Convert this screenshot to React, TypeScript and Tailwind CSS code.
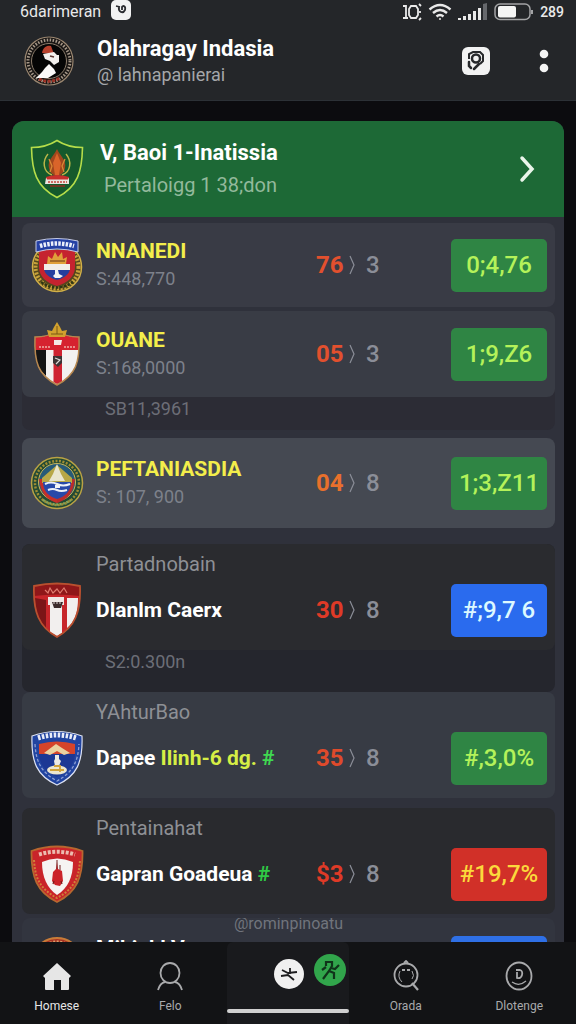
import type { ReactNode } from "react";
import { clsx } from "clsx";

const ShieldGreen = () => (
  <svg viewBox="0 0 54 60" className="h-[60px] w-[54px]" aria-hidden="true">
    <path
      d="M27 1.5C20 6 11 8.500 1.500 8.500C2 32 6 48 27 58.500C48 48 52 32 52.500 8.500C43 8.500 34 6 27 1.500Z"
      fill="#15592c"
      stroke="#b5dd4a"
      strokeWidth="1.600"
    />
    <path d="M18 15C12 22 13 33 22 36M36 15C42 22 41 33 32 36" fill="none" stroke="#b9b548" strokeWidth="1.500" />
    <path d="M27 10C24 17 17 21 19 29C20 35 25 37 27 37C29 37 34 35 35 29C37 21 30 17 27 10Z" fill="#a1471d" />
    <path d="M27 14L31 24L29 36H25L23 24Z" fill="#d9642a" />
    <path d="M19 20L22 27L20 33M35 20L32 27L34 33" fill="none" stroke="#d78a35" strokeWidth="1.300" />
    <path d="M16 39Q27 35 39 39V45H15Z" fill="#e9e5df" />
    <path d="M16 38Q27 34 39 38L38 40.500H17Z" fill="#c92f2c" />
    <path d="M18 43H37" stroke="#c6463f" strokeWidth="1.500" strokeDasharray="2 1" />
    <path d="M20 47H35" stroke="#8d2c20" strokeWidth="1.500" />
  </svg>
);

const CrestBlueBanner = () => (
  <svg viewBox="0 0 54 56" className="h-14 w-[54px]" aria-hidden="true">
    <circle cx="27" cy="30" r="24.500" fill="#54471d" stroke="#d2b048" strokeWidth="1.500" />
    <circle cx="27" cy="30" r="21.500" fill="none" stroke="#c8a23a" strokeWidth="4" strokeDasharray="2 1.500" />
    <path d="M9 13H45V30C45 40 37 46 27 49C17 46 9 40 9 30Z" fill="#c5232f" />
    <path d="M14 21H40V31C40 37 34 41 27 43C20 41 14 37 14 31Z" fill="#263e9e" />
    <path d="M14 21H40V28H14Z" fill="#c5232f" />
    <path d="M14 27H40V33H14Z" fill="#f1eee9" />
    <path d="M17 27L18 19L22 22L25 15L28 20L32 15L33 22L37 20L36 27Z" fill="#e0a03a" />
    <path d="M20 24H35" stroke="#8d5922" strokeWidth="1.500" />
    <path d="M25 33H28L29 37L33 39L30 41H25L23 39L25 37Z" fill="#f2f2f2" />
    <path d="M6 4Q27 -1 48 4V15Q27 9 6 15Z" fill="#2440a4" stroke="#c5cbe5" strokeWidth="1" />
    <path d="M10 9Q27 4 44 9" fill="none" stroke="#eceffa" strokeWidth="4.500" strokeDasharray="2.500 1.200" />
    <path d="M11 45Q27 56 43 45" fill="none" stroke="#2e3713" strokeWidth="2.500" strokeDasharray="2.500 1.500" />
  </svg>
);

const CrestStriped = () => (
  <svg viewBox="0 0 54 64" className="h-16 w-[54px]" aria-hidden="true">
    <path d="M5 15C14 15 21 13 27 9C33 13 40 15 49 15C50 40 46 53 27 63C8 53 4 40 5 15Z" fill="#f3f1f0" />
    <path d="M5 15C14 15 21 13 27 9C33 13 40 15 49 15L49 28H5Z" fill="#d6222f" />
    <path d="M5.500 28H16V54C8 47 5.500 40 5.500 28Z" fill="#141414" />
    <path d="M23.500 28H32V60L27 62L23.500 60Z" fill="#cf2231" />
    <path d="M9 25H20M34 25H45" stroke="#f0b0a8" strokeWidth="1.300" strokeDasharray="2 1" />
    <path d="M24 18H32L31 23H24Z" fill="#f3e9e4" />
    <path d="M23 34H32V41L28 45L23 41Z" fill="#3b3334" />
    <path d="M25 36L30 38L26 42" fill="none" stroke="#dedada" strokeWidth="1.200" />
    <path
      d="M5 15C14 15 21 13 27 9C33 13 40 15 49 15C50 40 46 53 27 63C8 53 4 40 5 15Z"
      fill="none"
      stroke="#b7874e"
      strokeWidth="1.500"
    />
    <path d="M19 15L17 8L22 9L24 5L27 0L30 5L32 9L37 8L35 15Z" fill="#d1a12e" />
    <path d="M21 12H33M27 4V12" stroke="#7a5713" strokeWidth="1" />
  </svg>
);

const CrestRound = () => (
  <svg viewBox="0 0 54 56" className="h-14 w-[54px]" aria-hidden="true">
    <circle cx="27" cy="28" r="25.500" fill="#234a34" stroke="#b9a244" strokeWidth="1.500" />
    <circle cx="27" cy="28" r="22" fill="none" stroke="#a08d34" strokeWidth="2.500" strokeDasharray="2 1.500" />
    <circle cx="27" cy="27" r="18.500" fill="#275a78" stroke="#c9b65a" strokeWidth="1" />
    <path d="M9 24C11 40 18 45 27 48V24Z" fill="#c63029" />
    <path d="M45 24C43 40 36 45 27 48V24Z" fill="#b92c2c" />
    <path d="M12 23L20 16L27 10L34 16L42 23V28H12Z" fill="#b7a746" />
    <path d="M27 9L31 19L35 26H19L23 19Z" fill="#e9e5cd" />
    <path d="M13 27H41C41 36 35 42 27 44C19 42 13 36 13 27Z" fill="#2849a9" />
    <path d="M15 29Q21 26 27 29T40 29M18 35Q23 33 27 35T37 35" fill="none" stroke="#eef1f8" strokeWidth="2" />
    <path d="M25 30H30V33H25Z" fill="#f5f5f5" />
    <path d="M13 45Q27 54 41 45" fill="none" stroke="#87a65c" strokeWidth="2.500" strokeDasharray="2 1.500" />
  </svg>
);

const CrestRedWhite = () => (
  <svg viewBox="0 0 54 56" className="h-14 w-[54px]" aria-hidden="true">
    <path d="M4 4Q27 -1 50 4C51 30 45 45 27 55C9 45 3 30 4 4Z" fill="#c7252a" />
    <path d="M4 4Q27 -1 50 4V14Q27 11 4 14Z" fill="#8f1719" />
    <path d="M15 8L18 11L20 6L23 11L27 7L30 11L34 6L37 11" fill="none" stroke="#e07a6e" strokeWidth="1.200" />
    <path d="M5 16L16 18V46C9 39 5 30 5 16Z" fill="#7c1517" />
    <path d="M20 22H32V51L27 54L20 50Z" fill="#f2efee" />
    <path d="M37 16H48C48 30 45 40 37 46Z" fill="#f2efee" />
    <path d="M18 15H34V23H18Z" fill="#efe8e6" />
    <path d="M22 20H33L31 26H24Z" fill="#3c2b2b" />
    <path d="M23 21H32" stroke="#d8d0d0" strokeWidth="1" strokeDasharray="2 1" />
    <path
      d="M4 4Q27 -1 50 4C51 30 45 45 27 55C9 45 3 30 4 4Z"
      fill="none"
      stroke="#b9502f"
      strokeWidth="1.800"
    />
  </svg>
);

const CrestBlueShield = () => (
  <svg viewBox="0 0 54 56" className="h-14 w-[54px]" aria-hidden="true">
    <path d="M2 6Q27 -3 52 6C53 32 47 46 27 55C7 46 1 32 2 6Z" fill="#2144a0" stroke="#dde2f2" strokeWidth="1.200" />
    <path d="M8 8Q27 2 46 8" fill="none" stroke="#e9ecf7" strokeWidth="5" strokeDasharray="2.500 1.500" />
    <path d="M5 14C6 32 11 42 27 51C43 42 48 32 49 14" fill="none" stroke="#8e9fd4" strokeWidth="1.300" strokeDasharray="3 2" />
    <path d="M9 14Q27 9 45 14V24H9Z" fill="#d5442b" />
    <path d="M9 24H45C44 36 38 42 27 47C16 42 10 36 9 24Z" fill="#1c3894" />
    <path d="M14 23L22 17L26 14L32 18L40 23L34 25L27 21L20 25Z" fill="#ebd2a0" />
    <path d="M25 25H29V29L31 31L29 36H25L24 31L25 29Z" fill="#eceae3" />
    <ellipse cx="27" cy="40" rx="10" ry="4.500" fill="#ece7cf" />
    <path d="M20 40H34M24 36H30V42" stroke="#d1a33a" strokeWidth="1.800" fill="none" />
  </svg>
);

const CrestRedShield = () => (
  <svg viewBox="0 0 54 58" className="h-[58px] w-[54px]" aria-hidden="true">
    <path d="M1.500 6Q27 -3 52.500 6C53 32 47 47 27 57C7 47 1 32 1.500 6Z" fill="#c9242a" stroke="#b7672f" strokeWidth="1.800" />
    <path d="M4 15C5 33 10 44 27 53C44 44 49 33 50 15" fill="none" stroke="#d0803a" strokeWidth="2" strokeDasharray="2 1.500" />
    <path d="M9 9.500Q27 4 45 9.500" fill="none" stroke="#ecbcb0" strokeWidth="4" strokeDasharray="3 1.500" />
    <path d="M12 17Q27 10 43 17C43 32 38 43 27 50C17 43 12 32 12 17Z" fill="#f6f3f2" />
    <path d="M27 17L28 24L32 26L33 36L30 41L25 40L22 36L23 27L26 24Z" fill="#cb2229" />
    <path d="M27 15V24M30 20V25" stroke="#712021" strokeWidth="1" />
    <path d="M24 36L23 39M31 36L32 39" stroke="#7b1719" strokeWidth="1.200" />
  </svg>
);

const Avatar = () => (
  <svg viewBox="0 0 52 52" className="size-[52px] shrink-0" aria-hidden="true">
    <circle cx="26" cy="26" r="24" fill="#191614" stroke="#9a8670" strokeWidth="1.200" />
    <circle cx="26" cy="26" r="21" fill="none" stroke="#a59788" strokeWidth="3" strokeDasharray="1.500 1.500" />
    <circle cx="26" cy="26" r="17.500" fill="#050505" stroke="#8b7c6b" strokeWidth="1" />
    <path d="M19 18C20 12 24 10 28 11L31 19Z" fill="#b6402c" />
    <path d="M20 19L31 17L34 20H36V27L31 30L27 26L22 24Z" fill="#f1eeec" />
    <path d="M26 29L31 34L33 38L25 43H13L19 37L22 33Z" fill="#faf9f8" />
    <path d="M27 21L31 22" stroke="#593530" strokeWidth="1.500" />
    <path d="M16 44Q26 49 37 43" fill="none" stroke="#9d3327" strokeWidth="3" strokeDasharray="3 1.500" />
  </svg>
);

type Tone = "green" | "blue" | "red";

const tones: Record<Tone, string> = {
  green: "bg-[#2f8544] text-[#b4f25a]",
  blue: "bg-[#2a6bee] text-[#dcf8ff]",
  red: "bg-[#d13028] text-[#fbd93c]",
};

interface Entry {
  crest: ReactNode;
  label?: string;
  name: ReactNode;
  amount?: string;
  score: string;
  scoreColor: string;
  rest: string;
  value: string;
  tone: Tone;
  row: string;
  note?: string;
  group: string;
}

const entries: Entry[] = [
  {
    crest: <CrestBlueBanner />,
    name: <span className="text-[#f3ee4b]">NNANEDI</span>,
    amount: "S:448,770",
    score: "76",
    scoreColor: "text-[#e2502e]",
    rest: "3",
    value: "0;4,76",
    tone: "green",
    row: "min-h-[84px] bg-[#393b45]",
    group: "mb-1",
  },
  {
    crest: <CrestStriped />,
    name: <span className="text-[#f3ee4b]">OUANE</span>,
    amount: "S:168,0000",
    score: "05",
    scoreColor: "text-[#e2502e]",
    rest: "3",
    value: "1;9,Z6",
    tone: "green",
    row: "min-h-[86px] bg-[#393c45]",
    note: "SB11,3961",
    group: "mb-2 bg-[#2c2c35]",
  },
  {
    crest: <CrestRound />,
    name: <span className="text-[#f3ee4b]">PEFTANIASDIA</span>,
    amount: "S: 107, 900",
    score: "04",
    scoreColor: "text-[#e8702c]",
    rest: "8",
    value: "1;3,Z11",
    tone: "green",
    row: "min-h-[90px] bg-[#454952]",
    group: "mb-4",
  },
  {
    crest: <CrestRedWhite />,
    label: "Partadnobain",
    name: "Dlanlm Caerx",
    score: "30",
    scoreColor: "text-[#df3a27]",
    rest: "8",
    value: "#;9,7 6",
    tone: "blue",
    row: "bg-[#2a2b2f]",
    note: "S2:0.300n",
    group: "bg-[#25262d]",
  },
  {
    crest: <CrestBlueShield />,
    label: "YAhturBao",
    name: (
      <>
        Dapee <span className="text-[#d6ee45]">Ilinh-6 dg.</span> <span className="text-[#3fd850]">#</span>
      </>
    ),
    score: "35",
    scoreColor: "text-[#df4a2b]",
    rest: "8",
    value: "#,3,0%",
    tone: "green",
    row: "bg-[#373b44]",
    group: "mb-2.5",
  },
  {
    crest: <CrestRedShield />,
    label: "Pentainahat",
    name: (
      <>
        Gapran Goadeua <span className="text-[#2fc845]">#</span>
      </>
    ),
    score: "$3",
    scoreColor: "text-[#df3a27]",
    rest: "8",
    value: "#19,7%",
    tone: "red",
    row: "bg-[#292a2e]",
    group: "mb-1",
  },
];

const EntryRow = ({ entry }: { entry: Entry }) => (
  <li className={clsx("rounded-lg", entry.group)}>
    <div
      className={clsx(
        "grid grid-cols-[54px_1fr_123px_96px] content-center items-center gap-x-3 rounded-lg px-2",
        entry.label && "pt-2 pb-3",
        entry.row,
      )}
    >
      {entry.label && (
        <p className="col-span-3 col-start-2 mb-1.5 text-xl leading-6 text-[#8e9095]">{entry.label}</p>
      )}
      <div className="flex h-14 items-center justify-center">{entry.crest}</div>
      <div className="min-w-0 whitespace-nowrap">
        <h2 className="text-[21px] leading-7 font-bold text-white">{entry.name}</h2>
        {entry.amount && <p className="text-lg leading-7 text-[#7d818b]">{entry.amount}</p>}
      </div>
      <p className="flex items-center text-2xl text-[#8b8e98]">
        <span className={clsx("w-7 font-bold", entry.scoreColor)}>{entry.score}</span>
        <svg viewBox="0 0 8 22" className="mx-1 h-[22px] w-2" fill="none" stroke="currentColor" aria-hidden="true">
          <path d="M2 2L6 11L2 20" strokeWidth="1.200" />
        </svg>
        <span className="ml-1.5 font-medium">{entry.rest}</span>
      </p>
      <span
        className={clsx(
          "flex h-[53px] items-center justify-center rounded-[5px] text-2xl font-medium whitespace-nowrap",
          tones[entry.tone],
        )}
      >
        {entry.value}
      </span>
    </div>
    {entry.note && (
      <p className={clsx("pl-[83px] text-lg leading-6 text-[#6c6e77]", entry.label ? "pb-[18px]" : "pb-[9px]")}>
        {entry.note}
      </p>
    )}
  </li>
);

const StatusBar = () => (
  <div className="flex h-6 items-center pr-3 pl-5 text-[#e9e9e9]">
    <span className="text-base leading-6">6darimeran</span>
    <svg viewBox="0 0 20 20" className="mb-1 ml-2.5 size-5" aria-hidden="true">
      <rect width="20" height="20" rx="5" fill="#f2f2f2" />
      <path d="M5 6L9 7M8 7C7 12 12 14 14 10C15 6 12 5 11 7V10" fill="none" stroke="#2b2c30" strokeWidth="1.800" />
    </svg>
    <div className="ml-auto flex items-center gap-1.5">
      <svg viewBox="0 0 20 20" className="size-5" fill="none" stroke="currentColor" strokeWidth="1.800" aria-hidden="true">
        <path d="M1 4H4V16M1 16H6" />
        <path d="M9 4H14L16 7V13L14 16H9L7 13V7Z" />
        <path d="M17 2L19 4M18 9V11M17 18L19 16" />
      </svg>
      <svg viewBox="0 0 24 18" className="h-[18px] w-6" fill="none" stroke="currentColor" strokeWidth="2.400" aria-hidden="true">
        <path d="M1.500 6.500Q12 -2.500 22.500 6.500M5 10Q12 4 19 10M8.500 13.500Q12 10.500 15.500 13.500" />
        <circle cx="12" cy="16" r="1" fill="currentColor" stroke="none" />
      </svg>
      <svg viewBox="0 0 30 18" className="h-[18px] w-[30px]" fill="currentColor" aria-hidden="true">
        <path d="M0 15H3V17H0ZM5 13H8V17H5ZM10 11H13V17H10ZM15 8H18V17H15ZM20 5H23V17H20Z" />
        <path d="M25 1L29 0V17H25Z" fill="#66686c" />
      </svg>
      <svg viewBox="0 0 40 18" className="h-[18px] w-10" aria-hidden="true">
        <rect x="1" y="1" width="35" height="15.500" rx="5" fill="none" stroke="#a2a3a5" strokeWidth="1.500" />
        <rect x="4" y="3" width="18" height="11.500" rx="2" fill="#f5f5f5" />
        <path d="M38 7V11" stroke="#a2a3a5" strokeWidth="2" />
      </svg>
      <span className="text-sm font-medium">289</span>
    </div>
  </div>
);

const Header = () => (
  <header className="shrink-0 border-b border-[#2c3136] bg-[#242629]">
    <StatusBar />
    <div className="flex h-[76px] items-center pr-6 pb-0.5 pl-[23px]">
      <Avatar />
      <div className="ml-[22px] whitespace-nowrap">
        <h1 className="text-[22px] leading-7 font-bold text-white">Olahragay Indasia</h1>
        <p className="text-lg leading-6 text-[#a5a7aa]">@ lahnapanierai</p>
      </div>
      <button type="button" aria-label="Find" className="ml-auto">
        <svg viewBox="0 0 28 28" className="size-7">
          <rect width="28" height="28" rx="6" fill="#f2f2f2" />
          <path d="M7 12V7L11 5H18L21 8V14L18 17" fill="none" stroke="#26282b" strokeWidth="2" />
          <circle cx="14" cy="11.500" r="4" fill="none" stroke="#26282b" strokeWidth="2.500" />
          <path d="M7 15V19L9 21M12 22L17 17" fill="none" stroke="#26282b" strokeWidth="2.500" strokeLinecap="round" />
        </svg>
      </button>
      <button type="button" aria-label="More" className="ml-[46px]">
        <svg viewBox="0 0 16 28" className="h-7 w-4" fill="#f4f4f4">
          <circle cx="8" cy="7" r="4.300" />
          <circle cx="8" cy="21" r="4.300" />
        </svg>
      </button>
    </div>
  </header>
);

const NavItem = ({ label, active, children }: { label: string; active?: boolean; children: ReactNode }) => (
  <a
    href="#"
    className={clsx(
      "flex flex-1 flex-col items-center gap-1 pt-[18px] text-xs leading-5",
      active ? "text-[#e6e6e6]" : "text-[#a9aaac]",
    )}
  >
    {children}
    {label}
  </a>
);

const BottomNav = () => (
  <nav className="flex h-[82px] shrink-0 bg-[#121315]">
    <NavItem label="Homese" active>
      <svg viewBox="0 0 30 32" className="h-8 w-[30px]" fill="currentColor" aria-hidden="true">
        <path d="M15 3L29 16L27 18V29Q27 30 26 30H19V20H12V30H4Q3 30 3 29V18L1 16Z" />
      </svg>
    </NavItem>
    <NavItem label="Felo">
      <svg viewBox="0 0 30 32" className="h-8 w-[30px]" fill="none" stroke="currentColor" strokeWidth="1.800" aria-hidden="true">
        <ellipse cx="15" cy="13" rx="9.500" ry="10" />
        <path d="M3 30Q5 23 10 22M27 30Q25 23 20 22" />
      </svg>
    </NavItem>
    <div className="flex w-[122px] flex-col items-end justify-between rounded-t-md bg-[#191a1d] pt-2 pb-[11px]">
      <div className="flex items-center gap-2 pr-0.5">
        <button type="button" aria-label="Matches" className="mt-2">
          <svg viewBox="0 0 32 32" className="size-8">
            <circle cx="16" cy="16" r="15" fill="#f0f0f0" />
            <path d="M9 12L15 15L24 14M8 18L15 17L21 22M17 10V16" fill="none" stroke="#1c1c1e" strokeWidth="1.800" />
          </svg>
        </button>
        <button type="button" aria-label="Play">
          <svg viewBox="0 0 34 34" className="size-[34px]">
            <circle cx="17" cy="17" r="16" fill="#31a54b" />
            <path d="M13 13V9H19V13L16 18L10 26M16 18L21 20V26M9 17L13 14M18 15L22 16L26 12" fill="none" stroke="#10331a" strokeWidth="2.200" />
          </svg>
        </button>
      </div>
      <span className="h-1 w-full rounded-full bg-[#d0d0d0]" />
    </div>
    <NavItem label="Orada">
      <svg viewBox="0 0 30 32" className="h-8 w-[30px]" fill="none" stroke="currentColor" strokeWidth="1.800" aria-hidden="true">
        <circle cx="15" cy="15" r="11.500" />
        <path d="M21 23L27 30" strokeWidth="2.200" />
        <path d="M9 11Q6 17 11 22M21 11Q24 16 21 19" strokeWidth="1" />
        <path d="M11 10H14M16 10H19M13 3L15 1L17 3" />
      </svg>
    </NavItem>
    <NavItem label="Dlotenge">
      <svg viewBox="0 0 30 32" className="h-8 w-[30px]" fill="none" stroke="currentColor" strokeWidth="1.800" aria-hidden="true">
        <ellipse cx="15" cy="16" rx="12.500" ry="13.500" />
        <path d="M12 10H16Q19 11 18 15Q17 19 13 18V12" />
        <path d="M8 22Q15 27 22 21" strokeWidth="1.200" />
      </svg>
    </NavItem>
  </nav>
);

const App = () => {
  return (
    <div className="flex h-screen flex-col bg-[#0c0c0f] font-['Roboto',sans-serif]">
      <Header />
      <main className="min-h-0 flex-1 overflow-hidden px-3 pt-5">
        <section className="min-h-full overflow-hidden rounded-t-xl bg-[#2f313b]">
          <div className="flex h-24 items-center bg-[#1d6936] pr-7 pl-[18px]">
            <ShieldGreen />
            <div className="ml-4 whitespace-nowrap">
              <h2 className="text-[22px] leading-8 font-bold text-white">V, Baoi 1-Inatissia</h2>
              <p className="pl-1 text-xl leading-8 text-[#93b99c]">Pertaloigg 1 38;don</p>
            </div>
            <button type="button" aria-label="Open" className="ml-auto">
              <svg viewBox="0 0 18 28" className="h-7 w-[18px]" fill="none" stroke="#e9f5ea" strokeWidth="3.500" strokeLinecap="round">
                <path d="M4 3L14 14L4 25" />
              </svg>
            </button>
          </div>
          <ul className="pt-1.5 pr-[9px] pl-2.5">
            {entries.map((entry) => (
              <EntryRow key={entry.value} entry={entry} />
            ))}
            <li className="rounded-lg bg-[#32353f]">
              <div className="flex h-4 items-end justify-center overflow-hidden">
                <p className="text-base leading-5 text-[#70747c]">@rominpinoatu</p>
              </div>
              <div className="grid grid-cols-[54px_1fr_123px_96px] gap-x-3 px-2 pt-0.5">
                <svg viewBox="0 0 54 54" className="size-[54px]" aria-hidden="true">
                  <circle cx="27" cy="27" r="25" fill="#a83222" stroke="#c77b38" strokeWidth="2" />
                  <circle cx="27" cy="27" r="21" fill="none" stroke="#d9a06a" strokeWidth="3" strokeDasharray="2 1.500" />
                </svg>
                <h2 className="text-[21px] leading-6 font-bold text-white">Mibinkl Vn</h2>
                <span className="col-start-4 h-[53px] rounded-[5px] bg-[#2f70e6]" />
              </div>
            </li>
          </ul>
        </section>
      </main>
      <BottomNav />
    </div>
  );
};

export default App;
